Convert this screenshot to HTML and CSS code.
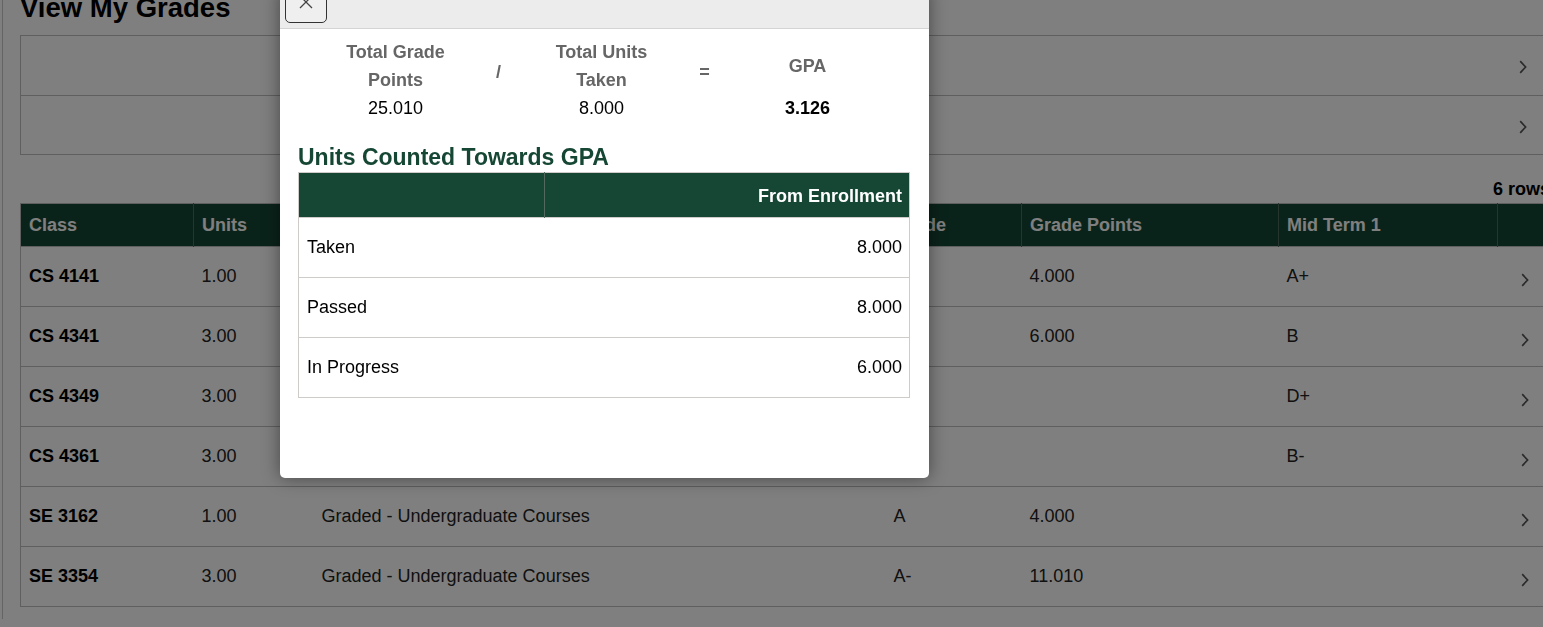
FILE: index.html
```html
<!DOCTYPE html>
<html lang="en">
<head>
<meta charset="utf-8">
<title>View My Grades</title>
<link rel="stylesheet" href="styles.css">
</head>
<body>
<div class="frame">
  <h1 class="title">View My Grades</h1>
  <div class="nav-box">
    <div class="nav-row"><svg class="chev" width="8" height="14" viewBox="0 0 8 14"><path d="M1.2 1.2 L6.6 7 L1.2 12.8"/></svg></div>
    <div class="nav-row"><svg class="chev" width="8" height="14" viewBox="0 0 8 14"><path d="M1.2 1.2 L6.6 7 L1.2 12.8"/></svg></div>
  </div>
  <div class="rows-count">6 rows</div>
  <table class="grades">
    <colgroup>
      <col class="c-class"><col class="c-units"><col class="c-basis"><col class="c-grade"><col class="c-points"><col class="c-mid"><col class="c-go">
    </colgroup>
    <thead>
      <tr><th>Class</th><th>Units</th><th>Grading</th><th>Grade</th><th>Grade Points</th><th>Mid Term 1</th><th></th></tr>
    </thead>
    <tbody>
      <tr><td class="cls">CS 4141</td><td>1.00</td><td>Graded - Undergraduate Courses</td><td>A</td><td>4.000</td><td>A+</td><td class="go"><svg class="chev" width="8" height="14" viewBox="0 0 8 14"><path d="M1.2 1.2 L6.6 7 L1.2 12.8"/></svg></td></tr>
      <tr><td class="cls">CS 4341</td><td>3.00</td><td>Graded - Undergraduate Courses</td><td>C</td><td>6.000</td><td>B</td><td class="go"><svg class="chev" width="8" height="14" viewBox="0 0 8 14"><path d="M1.2 1.2 L6.6 7 L1.2 12.8"/></svg></td></tr>
      <tr><td class="cls">CS 4349</td><td>3.00</td><td>Graded - Undergraduate Courses</td><td></td><td></td><td>D+</td><td class="go"><svg class="chev" width="8" height="14" viewBox="0 0 8 14"><path d="M1.2 1.2 L6.6 7 L1.2 12.8"/></svg></td></tr>
      <tr><td class="cls">CS 4361</td><td>3.00</td><td>Graded - Undergraduate Courses</td><td></td><td></td><td>B-</td><td class="go"><svg class="chev" width="8" height="14" viewBox="0 0 8 14"><path d="M1.2 1.2 L6.6 7 L1.2 12.8"/></svg></td></tr>
      <tr><td class="cls">SE 3162</td><td>1.00</td><td>Graded - Undergraduate Courses</td><td>A</td><td>4.000</td><td></td><td class="go"><svg class="chev" width="8" height="14" viewBox="0 0 8 14"><path d="M1.2 1.2 L6.6 7 L1.2 12.8"/></svg></td></tr>
      <tr><td class="cls">SE 3354</td><td>3.00</td><td>Graded - Undergraduate Courses</td><td>A-</td><td>11.010</td><td></td><td class="go"><svg class="chev" width="8" height="14" viewBox="0 0 8 14"><path d="M1.2 1.2 L6.6 7 L1.2 12.8"/></svg></td></tr>
    </tbody>
  </table>
</div>

<div class="overlay"></div>

<div class="modal">
  <div class="modal-head">
    <button class="close" type="button" aria-label="Close">
      <svg width="14" height="14" viewBox="0 0 14 14"><path d="M1 1 L13 13 M13 1 L1 13"/></svg>
    </button>
  </div>
  <div class="modal-body">
    <div class="gpa">
      <div class="lbl">Total Grade Points</div>
      <div class="lbl op">/</div>
      <div class="lbl">Total Units Taken</div>
      <div class="lbl op">=</div>
      <div class="lbl">GPA</div>
      <div class="val">25.010</div>
      <div class="val"></div>
      <div class="val">8.000</div>
      <div class="val"></div>
      <div class="val strong">3.126</div>
    </div>
    <h2 class="units-title">Units Counted Towards GPA</h2>
    <table class="units">
      <colgroup><col class="u-name"><col class="u-val"></colgroup>
      <thead><tr><th></th><th>From Enrollment</th></tr></thead>
      <tbody>
        <tr><td>Taken</td><td class="num">8.000</td></tr>
        <tr><td>Passed</td><td class="num">8.000</td></tr>
        <tr><td>In Progress</td><td class="num">6.000</td></tr>
      </tbody>
    </table>
  </div>
</div>
</body>
</html>
```

FILE: styles.css
```css
html, body {
  margin: 0;
  height: 100%;
  overflow: hidden;
}
body {
  font-family: "Liberation Sans", Arial, sans-serif;
  font-size: 18px;
  color: #000;
  background: #fff;
}

.frame {
  width: 1532px;
  min-height: 100vh;
  margin-left: 2px;
  border-left: 1px solid #c8c8c8;
  padding-left: 17px;
}

.title {
  margin: -8px 0 12px;
  font-size: 27.5px;
  line-height: 31px;
  font-weight: bold;
}

.chev {
  display: block;
  fill: none;
  stroke: #555;
  stroke-width: 1.7;
}

.nav-box {
  border: 1px solid #bebebe;
}
.nav-row {
  height: 59px;
  box-sizing: border-box;
  padding: 3px 24px 0 0;
  display: flex;
  align-items: center;
  justify-content: flex-end;
}
.nav-row + .nav-row {
  border-top: 1px solid #bebebe;
}

.rows-count {
  margin: 24px 2px 3px 0;
  text-align: right;
  font-weight: bold;
  line-height: 21px;
}

.grades {
  width: 1532px;
  table-layout: fixed;
  border-collapse: collapse;
  border: 1px solid #bebebe;
}
.c-class { width: 173px; }
.c-units { width: 120px; }
.c-basis { width: 572px; }
.c-grade { width: 136px; }
.c-points { width: 257px; }
.c-mid { width: 219px; }
.c-go { width: 55px; }

.grades th {
  height: 41px;
  padding: 1px 8px 0;
  background: #154734;
  color: #fff;
  font-weight: bold;
  text-align: left;
  border-left: 1px solid #4c6c5f;
}
.grades th:first-child { border-left: none; }

.grades td {
  height: 53px;
  padding: 0 8px;
  border-top: 1px solid #bebebe;
  color: #222;
}
.grades td.cls {
  font-weight: bold;
  color: #000;
}
.grades td.go {
  padding: 6px 0 0;
}
.grades td.go .chev {
  margin: 0 auto;
}

.overlay {
  position: fixed;
  inset: 0;
  background: rgba(0, 0, 0, 0.5);
}

.modal {
  position: absolute;
  left: 280px;
  top: -12px;
  width: 649px;
  height: 490px;
  background: #fff;
  border-radius: 5px;
  box-shadow: 0 0 18px rgba(0, 0, 0, 0.45);
  overflow: hidden;
}

.modal-head {
  height: 41px;
  box-sizing: border-box;
  background: #ececec;
  border-bottom: 1px solid #d4d4d4;
  display: flex;
  align-items: flex-end;
  padding: 0 0 5px 5px;
}
.close {
  width: 42px;
  height: 34px;
  padding: 0;
  border: 1.5px solid #333;
  border-radius: 5px;
  background: #efefef;
  display: flex;
  align-items: center;
  justify-content: center;
}
.close svg {
  margin-bottom: 9px;
  fill: none;
  stroke: #444;
  stroke-width: 1.3;
}

.modal-body {
  padding: 9px 19px 0 18px;
}

.gpa {
  display: grid;
  grid-template-columns: repeat(5, 103px);
  margin-left: 46px;
}
.lbl {
  align-self: center;
  text-align: center;
  font-weight: bold;
  color: #666;
  line-height: 28px;
}
.lbl.op {
  padding-top: 11px;
}
.val {
  text-align: center;
  line-height: 28px;
}
.val.strong {
  font-weight: bold;
}

.units-title {
  margin: 22px 0 2px;
  font-size: 23px;
  line-height: 26px;
  font-weight: bold;
  color: #154734;
}

.units {
  width: 100%;
  table-layout: fixed;
  border-collapse: collapse;
  border: 1px solid #cfcbc9;
}
.u-name { width: 246px; }
.units th {
  height: 41px;
  padding: 3px 7px 0;
  background: #154734;
  color: #fff;
  font-weight: bold;
  text-align: right;
}
.units th:first-child {
  border-right: 1px solid #52695f;
}
.units td {
  height: 59px;
  padding: 0 7px 0 8px;
  border-top: 1px solid #cfcbc9;
}
.units td.num {
  text-align: right;
}
```
